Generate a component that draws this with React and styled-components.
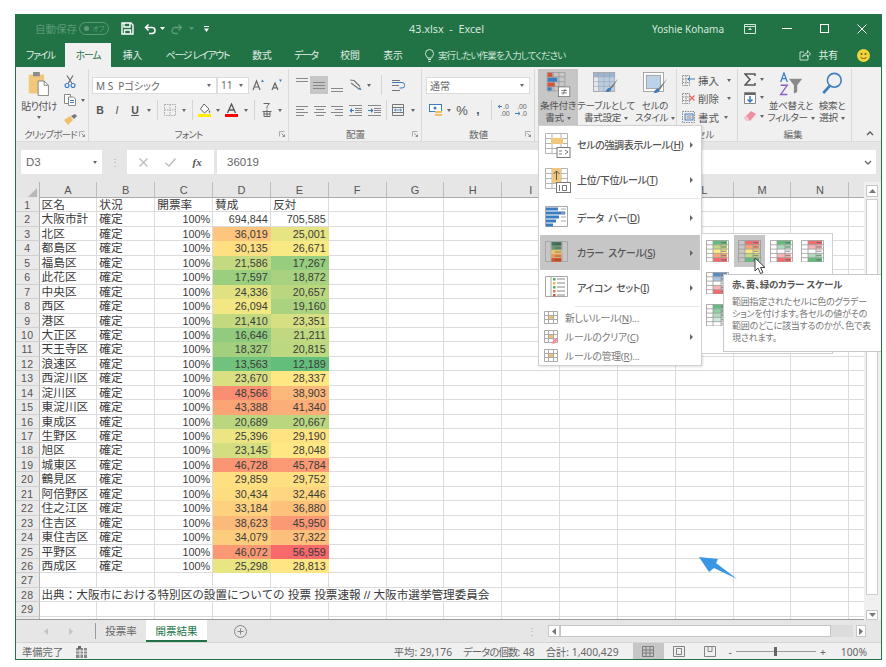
import styled, { createGlobalStyle } from 'styled-components';

const UI = '"Noto Sans", "Noto Sans CJK JP", sans-serif';
const CELL = '"Liberation Sans", "Noto Sans CJK JP", sans-serif';
const GREEN = '#217346';

const GlobalStyle = createGlobalStyle`
  html, body { margin: 0; padding: 0; background: #fff; }
  body { font-family: ${UI}; font-feature-settings: "palt"; overflow: hidden; }
`;

const Page = styled.div`
  padding: 14px 0 0 15px;
  width: 886px;
  height: 667px;
  box-sizing: border-box;
`;

const Window = styled.div`
  position: relative;
  width: 867px;
  height: 646px;
  box-sizing: border-box;
  border: 1px solid ${GREEN};
  border-top: 0;
  display: flex;
  flex-direction: column;
  background: #e6e6e6;
  overflow: hidden;
`;

/* title bar */
const TitleBar = styled.div`
  height: 29px;
  flex: none;
  background: ${GREEN};
  display: grid;
  grid-template-columns: 1fr auto 1fr;
  align-items: center;
  color: #d5e6dc;
  font-size: 10.5px;
`;

const FileName = styled.span`
  white-space: pre;
  font-size: 10.8px;
  padding-right: 4px;
`;

const Quick = styled.div`
  display: flex;
  align-items: center;
  padding-left: 19px;
`;

const AutoSave = styled.span`
  color: #5d9a78;
  font-size: 10.5px;
  width: 44px;
`;

const Toggle = styled.span`
  width: 24px;
  height: 11px;
  border: 1px solid #5d9a78;
  border-radius: 7px;
  color: #5d9a78;
  font-size: 7px;
  line-height: 11px;
  display: flex;
  align-items: center;
  padding-left: 4px;
  box-sizing: content-box;
  margin-right: 6px;
  gap: 3px;
  white-space: nowrap;
  overflow: hidden;
  &::before {
    content: '';
    width: 5px;
    height: 5px;
    flex: none;
    border-radius: 50%;
    background: #5d9a78;
  }
`;

const QuickSlot = styled.span`
  width: ${(p) => p.$w}px;
  display: flex;
  justify-content: center;
  align-items: center;
`;

const WinControls = styled.div`
  display: flex;
  align-items: center;
  justify-content: flex-end;
`;

const UserName = styled.span`
  margin-right: 7px;
  font-size: 10px;
`;

const WinButton = styled.span`
  width: 37.5px;
  display: flex;
  justify-content: center;
  align-items: center;
`;

const TabBar = styled.div`
  height: 24px;
  flex: none;
  background: ${GREEN};
  display: flex;
  align-items: stretch;
  color: #e4efe8;
  font-size: 9.8px;
`;

const Tab = styled.div`
  width: ${(p) => p.$w}px;
  display: flex;
  align-items: center;
  justify-content: center;
  white-space: nowrap;
  letter-spacing: ${(p) => (p.$kana ? '-1.2px' : '0')};
  background: ${(p) => (p.$active ? '#f0f0f0' : 'transparent')};
  color: ${(p) => (p.$active ? GREEN : 'inherit')};
`;

const TellMe = styled.div`
  display: flex;
  align-items: center;
  gap: 4px;
  margin-left: 10px;
  color: #cfe2d7;
  font-size: 9.5px;
  letter-spacing: -0.9px;
  white-space: nowrap;
`;

const ShareBox = styled.div`
  margin-left: auto;
  display: flex;
  align-items: center;
  gap: 7px;
  padding-right: 11px;
`;

const Smile = styled.span`
  margin-left: 12px;
  display: flex;
`;

/* ribbon */
const Ribbon = styled.div`
  height: 75px;
  flex: none;
  background: #f0f0f0;
  display: flex;
  color: #555;
  font-size: 10px;
  border-bottom: 1px solid #dcdcdc;
  box-sizing: border-box;
`;

const Group = styled.div`
  width: ${(p) => p.$w}px;
  flex: none;
  box-sizing: border-box;
  display: flex;
  flex-direction: column;
  margin-top: 2px;
  border-right: 1px solid #d9d9d9;
  padding-left: ${(p) => p.$pad || 0}px;
`;

const GroupBody = styled.div`
  flex: 1;
  min-height: 0;
`;

const GroupFoot = styled.div`
  height: 14px;
  flex: none;
  display: grid;
  grid-template-columns: 1fr auto 1fr;
  align-items: center;
  color: #666;
  font-size: 9.6px;
  white-space: nowrap;
  padding-right: 3px;
`;

const FootLabel = styled.span`
  letter-spacing: ${(p) => (p.$kana ? '-0.9px' : '0')};
`;

const Launcher = styled.span`
  justify-self: end;
  display: flex;
`;

const ToolRow = styled.div`
  display: flex;
  align-items: center;
  height: 18px;
  margin-top: ${(p) => p.$top || 0}px;
`;

const Tool = styled.span`
  width: ${(p) => p.$w}px;
  height: 18px;
  flex: none;
  display: flex;
  align-items: center;
  justify-content: center;
  background: ${(p) => (p.$on ? '#c6c6c6' : 'transparent')};
  color: #555;
  font-size: ${(p) => p.$fs || 11}px;
  font-weight: ${(p) => (p.$bold ? 700 : 400)};
  font-style: ${(p) => (p.$italic ? 'italic' : 'normal')};
  text-decoration: ${(p) => (p.$under ? 'underline' : 'none')};
  font-family: ${CELL};
`;

const Caret = styled.i`
  width: 0;
  height: 0;
  flex: none;
  margin-left: ${(p) => p.$left || 0}px;
  border-left: 2.5px solid transparent;
  border-right: 2.5px solid transparent;
  border-top: 3px solid #666;
  display: inline-block;
`;

const Rule = styled.span`
  width: ${(p) => p.$w}px;
  height: 20px;
  flex: none;
  display: flex;
  justify-content: center;
  &::before {
    content: '';
    width: 1px;
    background: #d4d4d4;
  }
`;

const SelectBox = styled.div`
  width: ${(p) => p.$w}px;
  height: 17px;
  flex: none;
  box-sizing: border-box;
  background: #fff;
  border: 1px solid #dcdcdc;
  display: flex;
  align-items: center;
  justify-content: space-between;
  padding: 0 5px 0 3px;
  color: #666;
  font-size: 10px;
  white-space: pre;
`;

const ClipWrap = styled.div`
  display: flex;
  padding: 3px 0 0 5px;
`;

const PasteCol = styled.div`
  width: 36px;
  display: flex;
  flex-direction: column;
  align-items: center;
  gap: 4px;
  font-size: 10px;
  line-height: 12px;
  letter-spacing: -0.6px;
  white-space: nowrap;
  color: #555;
`;

const SmallCol = styled.div`
  display: flex;
  flex-direction: column;
  gap: 1px;
  padding-left: 5px;
`;

const BigRow = styled.div`
  display: flex;
  gap: 2px;
  padding-left: 3px;
  height: 56px;
`;

const BigButton = styled.div`
  width: ${(p) => p.$w}px;
  flex: none;
  display: flex;
  flex-direction: column;
  align-items: center;
  padding-top: 3px;
  box-sizing: border-box;
  background: ${(p) => (p.$on ? '#c6c6c6' : 'transparent')};
  font-size: 9.6px;
  line-height: 12px;
  letter-spacing: -0.35px;
  color: #555;
  white-space: nowrap;
  text-align: center;
`;

const IconSlot = styled.div`
  height: 25px;
  display: flex;
  align-items: flex-start;
`;

const BigLabel = styled.div`
  margin-top: 3px;
  display: flex;
  flex-direction: column;
  align-items: center;
`;

const BigLine = styled.span`
  display: flex;
  align-items: center;
`;

const CellStack = styled.div`
  padding: 2px 0 0 5px;
  display: flex;
  flex-direction: column;
`;

const CellRow = styled.div`
  height: 18.5px;
  display: flex;
  align-items: center;
  gap: 3px;
  font-size: 10.5px;
  white-space: nowrap;
`;

const EditWrap = styled.div`
  display: flex;
`;

const EditStack = styled.div`
  width: 29px;
  box-sizing: border-box;
  padding: 1px 0 0 6px;
  display: flex;
  flex-direction: column;
`;

const EditRow = styled.div`
  height: 18.5px;
  display: flex;
  align-items: center;
  gap: 4px;
`;

const CollapseSlot = styled.div`
  flex: 1;
  display: flex;
  justify-content: flex-end;
  align-items: flex-end;
  padding: 0 7px 5px 0;
`;

/* formula bar */
const FormulaBar = styled.div`
  height: 40px;
  flex: none;
  display: flex;
  align-items: center;
  padding: 0 5px;
  background: #e6e6e6;
  color: #666;
  font-size: 11.5px;
`;

const NameBox = styled.div`
  width: 81px;
  height: 24px;
  box-sizing: border-box;
  background: #fff;
  display: flex;
  align-items: center;
  justify-content: space-between;
  padding: 0 5px;
  font-family: ${CELL};
`;

const Dots = styled.span`
  width: 25px;
  text-align: center;
  color: #aaa;
  font-size: 10px;
`;

const FxBox = styled.div`
  width: 87px;
  height: 24px;
  background: #fff;
  display: flex;
  align-items: center;
  justify-content: space-around;
  padding: 0 4px;
  box-sizing: border-box;
  margin-right: 3px;
  color: #bbb;
`;

const FxMark = styled.span`
  color: #555;
  font: italic 700 11px "Liberation Serif", serif;
`;

const FormulaInput = styled.div`
  flex: 1;
  height: 24px;
  background: #fff;
  display: flex;
  align-items: center;
  justify-content: space-between;
  padding: 0 4px 0 10px;
  font-family: ${CELL};
  font-size: 11.5px;
`;

/* sheet */
const SheetArea = styled.div`
  height: 438px;
  flex: none;
  display: flex;
  background: #fff;
`;

const Sheet = styled.div`
  width: 848px;
  flex: none;
  overflow: hidden;
  border-bottom: 1px solid #9a9a9a;
  box-sizing: border-box;
`;

const Grid = styled.div`
  display: grid;
  grid-template-columns: 23.5px repeat(15, 57.85px);
  grid-template-rows: 16px;
  grid-auto-rows: 14.44px;
  font-family: ${CELL};
`;

const Corner = styled.div`
  background: #e6e6e6;
  border-right: 1px solid #b5b5b5;
  display: flex;
  align-items: flex-end;
  justify-content: flex-end;
  padding: 0 2px 1px 0;
  box-sizing: border-box;
`;

const ColHead = styled.div`
  background: #e6e6e6;
  border-right: 1px solid #bdbdbd;
  border-bottom: 1px solid #ababab;
  box-sizing: border-box;
  text-align: center;
  color: #555;
  font-size: 11px;
  line-height: 16px;
`;

const RowHead = styled.div`
  background: #e9e9e9;
  border-right: 1px solid #b5b5b5;
  border-bottom: 1px solid #d0d0d0;
  box-sizing: border-box;
  text-align: center;
  color: #555;
  font-size: 10.5px;
  line-height: 14px;
  letter-spacing: 0.3px;
`;

const Cell = styled.div`
  grid-column: span ${(p) => p.$span || 1};
  border-right: 1px solid #dcdcdc;
  border-bottom: 1px solid #dcdcdc;
  box-sizing: border-box;
  padding: 0 2px;
  text-align: ${(p) => (p.$right ? 'right' : 'left')};
  color: #3a3a3a;
  font-size: ${(p) => (p.$right ? 10.8 : p.$span ? 11.6 : 11.7)}px;
  font-feature-settings: normal;
  line-height: 14px;
  white-space: nowrap;
  overflow: hidden;
`;

const VScroll = styled.div`
  flex: 1;
  background: #f0f0f0;
  display: flex;
  flex-direction: column;
  padding: 3px 3px 0 2px;
  box-sizing: border-box;
`;

const ScrollBtn = styled.div`
  height: ${(p) => p.$h || 11}px;
  flex: none;
  background: #fff;
  border: 1px solid #c8c8c8;
  box-sizing: border-box;
  display: flex;
  align-items: center;
  justify-content: center;
`;

const VThumb = styled.div`
  height: 396px;
  flex: none;
  margin-top: 2px;
  background: #fff;
  border: 1px solid #cfcfcf;
  box-sizing: border-box;
`;

const VGap = styled.div`
  flex: 1;
`;

/* sheet tabs */
const TabStrip = styled.div`
  height: 22px;
  flex: none;
  display: flex;
  align-items: stretch;
  background: #e6e6e6;
  border-bottom: 1px solid #d5d5d5;
  color: #666;
  font-size: 10.5px;
`;

const NavArrows = styled.div`
  width: 80px;
  display: flex;
  align-items: center;
  justify-content: space-around;
  padding: 0 12px 0 18px;
  box-sizing: border-box;
  border-right: 1px solid #9a9a9a;
  margin: 3px 0;
`;

const SheetTab = styled.div`
  width: ${(p) => p.$w}px;
  flex: none;
  display: flex;
  align-items: center;
  justify-content: center;
  background: ${(p) => (p.$active ? '#fff' : 'transparent')};
  color: ${(p) => (p.$active ? GREEN : '#666')};
  border-bottom: 2px solid ${(p) => (p.$active ? GREEN : 'transparent')};
  box-sizing: border-box;
`;

const AddSheet = styled.div`
  width: 66px;
  display: flex;
  align-items: center;
  justify-content: center;
`;

const HScrollWrap = styled.div`
  margin-left: auto;
  display: flex;
  align-items: center;
  padding-right: 15px;
`;

const HDots = styled.span`
  color: #aaa;
  margin-right: 11px;
  font-size: 10px;
`;

const HBtn = styled.div`
  width: ${(p) => p.$w}px;
  height: 12px;
  background: #fff;
  border: 1px solid #c8c8c8;
  box-sizing: border-box;
  display: flex;
  align-items: center;
  justify-content: center;
`;

const HTrack = styled.div`
  width: 293px;
  height: 12px;
  margin-right: 3px;
  background: #dcdcdc;
`;

const HThumb = styled.div`
  width: 271px;
  height: 12px;
  box-sizing: border-box;
  background: #fff;
  border: 1px solid #c4c4c4;
`;

/* status bar */
const StatusBar = styled.div`
  flex: 1;
  display: flex;
  align-items: center;
  background: #f0f0f0;
  color: #666;
  font-size: 10.3px;
  padding-left: 6px;
  white-space: nowrap;
`;

const StatusMode = styled.span`
  width: 54px;
`;

const StatusInfo = styled.div`
  margin-left: auto;
  display: flex;
  gap: 11px;
`;

const StatusKana = styled.span`
  letter-spacing: -0.8px;
`;

const ViewBtn = styled.span`
  width: 31px;
  height: 17px;
  display: flex;
  align-items: center;
  justify-content: center;
  background: ${(p) => (p.$on ? '#c6c6c6' : 'transparent')};
`;

const ViewGroup = styled.div`
  display: flex;
  margin-left: 14px;
`;

const Zoom = styled.div`
  display: flex;
  align-items: center;
  margin: 0 14px 0 3px;
  gap: 4px;
`;

const ZoomTrack = styled.div`
  position: relative;
  width: 80px;
  height: 1px;
  background: #9a9a9a;
  &::after {
    content: '';
    position: absolute;
    left: 38px;
    top: -4px;
    width: 3px;
    height: 9px;
    background: #666;
  }
`;

const ZoomLabel = styled.span`
  margin-left: 11px;
`;

/* conditional formatting menu, over the sheet */
const Menu = styled.div`
  position: absolute;
  left: 522px;
  top: 111px;
  width: 164px;
  height: 241px;
  box-sizing: border-box;
  background: #fff;
  border: 1px solid #d0d0d0;
  padding: 1px;
  box-shadow: 1px 1px 2px rgba(0, 0, 0, 0.12);
  color: #555;
`;

const MenuItem = styled.div`
  height: ${(p) => (p.$small ? 19 : 35)}px;
  display: flex;
  align-items: center;
  background: ${(p) => (p.$on ? '#c6c6c6' : 'transparent')};
  font-size: ${(p) => (p.$small ? 9.8 : 10)}px;
  font-weight: ${(p) => (p.$small ? 400 : 500)};
  letter-spacing: ${(p) => (p.$small ? '-0.2px' : '-0.35px')};
  color: ${(p) => (p.$small ? '#777' : '#555')};
  white-space: pre;
`;

const MenuIcon = styled.span`
  width: ${(p) => (p.$small ? 25 : 37)}px;
  padding-left: ${(p) => (p.$small ? 4 : 5)}px;
  box-sizing: border-box;
  flex: none;
  display: flex;
`;

const MenuText = styled.span`
  flex: 1;
`;

const Key = styled.span`
  text-decoration: underline;
`;

const MenuArrow = styled.i`
  width: 0;
  height: 0;
  margin-right: 7px;
  border-top: 3px solid transparent;
  border-bottom: 3px solid transparent;
  border-left: 3.5px solid #666;
`;

const MenuRule = styled.div`
  height: 1px;
  margin: 1px 0 1px 35px;
  background: #e6e6e6;
`;

const SubMenu = styled.div`
  position: absolute;
  left: 685px;
  top: 219px;
  width: 132px;
  height: 121px;
  box-sizing: border-box;
  background: #fff;
  border: 1px solid #d0d0d0;
  padding: 1px 0 0;
  display: grid;
  grid-template-columns: repeat(4, 31.7px);
  grid-auto-rows: 32px;
`;

const SwatchBtn = styled.span`
  display: flex;
  align-items: center;
  justify-content: center;
  background: ${(p) => (p.$on ? '#c6c6c6' : 'transparent')};
`;

const Tooltip = styled.div`
  position: absolute;
  left: 707px;
  top: 260px;
  width: 159px;
  height: 78px;
  box-sizing: border-box;
  background: #fff;
  border: 1px solid #c8c8c8;
  padding: 4px 8px;
  color: #777;
  font-size: 9px;
  line-height: 12px;
  letter-spacing: -0.2px;
`;

const TipTitle = styled.div`
  font-weight: 700;
  color: #555;
  margin-bottom: 5px;
  font-size: 9.5px;
  white-space: nowrap;
`;

const TipLine = styled.div`
  white-space: nowrap;
`;

const Overlay = styled.svg`
  position: absolute;
  left: ${(p) => p.$x}px;
  top: ${(p) => p.$y}px;
`;

/* drawings */
const Svg = styled.svg`
  display: block;
  flex: none;
`;

const Icon = ({ w, h, vw, vh, children }) => (
  <Svg width={w} height={h} viewBox={`0 0 ${vw || w} ${vh || h}`} fill="none">{children}</Svg>
);

const Lines = ({ x = 1, ys, w = 14, color = '#777' }) => (
  <>
    {ys.map((y) => <rect key={y} x={x} y={y} width={w} height="1" fill={color} />)}
  </>
);

const SaveIcon = () => (
  <Icon w={13} h={13}>
    <path d="M1 1h9l2 2v9H1z M3 1.5v3.5h6V1.5 M3.5 12V8h6v4" stroke="#fff" strokeWidth="1.4" />
  </Icon>
);
const UndoIcon = () => (
  <Icon w={13} h={12}>
    <path d="M4.5 1.5 1.5 4.5 4.5 7.5 M2 4.5h6a3 3 0 0 1 0 6H5" stroke="#fff" strokeWidth="1.5" />
  </Icon>
);
const RedoIcon = () => (
  <Icon w={13} h={12}>
    <path d="M8.5 1.5 11.5 4.5 8.5 7.5 M11 4.5H5a3 3 0 0 0 0 6h3" stroke="#5d9a78" strokeWidth="1.3" />
  </Icon>
);
const TinyCaret = ({ color = '#fff' }) => (
  <Icon w={5} h={3}><path d="M0 0h5L2.5 3z" fill={color} /></Icon>
);
const CustomizeIcon = () => (
  <Icon w={5} h={6}><path d="M0 0h5v1H0z M0 2.5h5L2.5 6z" fill="#fff" /></Icon>
);
const DisplayIcon = () => (
  <Icon w={12} h={10}>
    <path d="M.5.5h11v9H.5z M.5 2.5h11" stroke="#d5e6dc" />
    <path d="M6 3.5 8 6H4z" fill="#d5e6dc" />
  </Icon>
);
const MinIcon = () => <Icon w={10} h={2}><rect width="10" height="1" fill="#fff" /></Icon>;
const MaxIcon = () => <Icon w={9} h={9}><rect x=".5" y=".5" width="8" height="8" stroke="#fff" /></Icon>;
const CloseIcon = () => (
  <Icon w={10} h={10}><path d="M.5.5l9 9M9.5.5l-9 9" stroke="#fff" /></Icon>
);
const BulbIcon = () => (
  <Icon w={9} h={13}>
    <path d="M2.5 9C2 7.5.5 6.5.5 4.5a4 4 0 0 1 8 0C8.5 6.5 7 7.5 6.5 9zM3 10.5h3M3.5 12.5h2" stroke="#e4efe8" strokeWidth=".9" />
  </Icon>
);
const ShareIcon = () => (
  <Icon w={12} h={12}>
    <path d="M5 3H1v8h8V7 M3.5 8c.5-3 3-4 5-4V1.5L11.5 5 8.5 8V6C6.5 6 5 6.5 3.5 8z" stroke="#d5e6dc" strokeWidth=".9" />
  </Icon>
);
const SmileIcon = () => (
  <Icon w={13} h={13}>
    <circle cx="6.5" cy="6.5" r="6.5" fill="#f3d43b" />
    <circle cx="4.5" cy="5" r="1" fill="#5d5a20" />
    <circle cx="8.5" cy="5" r="1" fill="#5d5a20" />
    <path d="M3.5 8c1 2 5 2 6 0" stroke="#5d5a20" />
  </Icon>
);
const LaunchIcon = () => (
  <Icon w={6} h={6}>
    <path d="M.5 5.5V.5h5" stroke="#999" strokeWidth=".8" />
    <path d="M2.5 2.5 5.5 5.5M5.5 3.5v2h-2" stroke="#777" strokeWidth=".8" />
  </Icon>
);
const PasteIcon = () => (
  <Icon w={22} h={24} vw={24} vh={28}>
    <rect x="0" y="3" width="18" height="22" fill="#f0c77c" />
    <rect x="5" y="0" width="8" height="5" fill="#8c8c8c" />
    <path d="M11 10.5h7l5 5v12H11z" fill="#fff" stroke="#777" />
    <path d="M18 10.5v5h5" stroke="#777" />
  </Icon>
);
const ScissorsIcon = () => (
  <Icon w={12} h={13}>
    <path d="M3 .5 8 8.5M9 .5 4 8.5" stroke="#666" strokeWidth="1.1" />
    <circle cx="3" cy="10.5" r="2" stroke="#3e7cc0" strokeWidth="1.2" />
    <circle cx="9" cy="10.5" r="2" stroke="#3e7cc0" strokeWidth="1.2" />
  </Icon>
);
const CopyIcon = () => (
  <Icon w={12} h={12}>
    <path d="M.5.5h6v9h-6z" stroke="#888" fill="#fff" />
    <path d="M4.5 3h5l2 2v6.5h-7z" stroke="#888" fill="#fff" />
    <path d="M6 6.5h4M6 8.5h4" stroke="#3e7cc0" />
  </Icon>
);
const BrushIcon = () => (
  <Icon w={13} h={11}>
    <path d="M0 6 6 2l3 4-5 5z" fill="#efc06b" />
    <path d="M7 2l4-2 2 2-3 3z" fill="#777" />
  </Icon>
);
const GrowIcon = ({ big }) => (
  <Icon w={13} h={12}>
    <path d={big ? 'M1 11 4.5 2 8 11M2.3 8h4.4' : 'M2 11 5 4l3 7M3 8.8h4'} stroke="#666" strokeWidth="1.2" />
    <path d={big ? 'M9 3l1.5-2.5L12 3z' : 'M9 .5h3L10.5 3z'} fill="#3e7cc0" />
  </Icon>
);
const BorderIcon = () => (
  <Icon w={12} h={12}>
    <path d="M.5.5h11v11H.5zM6 .5v11M.5 6h11" stroke="#aaa" strokeDasharray="1.5 1" />
  </Icon>
);
const FillIcon = () => (
  <Icon w={14} h={14}>
    <path d="M6 1 11 6 6.5 10 2.5 6z" stroke="#666" fill="#fff" />
    <path d="M11.5 7c1 1.5 1 2.5 0 3-1-.5-1-1.5 0-3z" fill="#666" />
    <rect x="0" y="11" width="13" height="3" fill="#ffee00" />
  </Icon>
);
const FontColorIcon = () => (
  <Icon w={13} h={14}>
    <path d="M2.5 10 6.5 1l4 9M4 7h5" stroke="#555" strokeWidth="1.3" />
    <rect y="11" width="13" height="3" fill="#f00" />
  </Icon>
);
const PhoneticIcon = () => (
  <Icon w={10} h={14}>
    <path d="M1.5.5h6L5 3.5v2M.5 8.5h9M2 8.5v5h6v-5M5 6.5v7M2 11h6" stroke="#666" />
  </Icon>
);
const AlignIcon = ({ kind }) => {
  const ys = { top: [1, 4], mid: [5, 8, 11], bot: [11, 14] }[kind];
  return <Icon w={12} h={16}><Lines x={0} ys={ys} w={12} color="#888" /></Icon>;
};
const HAlignIcon = ({ kind }) => {
  const widths = [12, 8, 12, 8];
  const off = { left: () => 0, center: (w) => (12 - w) / 2, right: (w) => 12 - w };
  return (
    <Icon w={12} h={11}>
      {widths.map((w, i) => <rect key={i} x={off[kind](w)} y={i * 3 + 1} width={w} height="1" fill="#888" />)}
    </Icon>
  );
};
const IndentIcon = ({ right }) => (
  <Icon w={13} h={11}>
    <Lines x={0} ys={[0, 10]} w={13} color="#888" />
    <Lines x={6} ys={[3, 5, 7]} w={7} color="#888" />
    <path d={right ? 'M0 5h3V3l2.5 2.5L3 8V6H0z' : 'M5 5H3V3L.5 5.5 3 8V6h2z'} fill="#3e7cc0" />
  </Icon>
);
const OrientIcon = () => (
  <Icon w={13} h={12}>
    <path d="M1 1l4 .5M2 4l8 6M5 1.5l6 6" stroke="#777" strokeWidth="1.1" />
    <path d="M11 8l1.5 3-3-.5z" fill="#3e7cc0" />
  </Icon>
);
const WrapIcon = () => (
  <Icon w={13} h={13}>
    <Lines x={0} ys={[1, 11]} w={8} color="#777" />
    <rect y="6" width="7" height="1" fill="#777" />
    <path d="M0 3.5h10a2 2 0 0 1 0 5.5H7.5" stroke="#3e7cc0" />
  </Icon>
);
const MergeIcon = () => (
  <Icon w={12} h={12}>
    <path d="M.5.5h11v11H.5zM.5 3.5h11M.5 8.5h11" stroke="#777" />
    <path d="M2.5 6h7M4 4.8 2.5 6 4 7.2M8 4.8 9.5 6 8 7.2" stroke="#3e7cc0" strokeWidth=".8" />
  </Icon>
);
const CurrencyIcon = () => (
  <Icon w={13} h={13}>
    <rect x=".5" y=".5" width="12" height="7" fill="#fff" stroke="#3e7cc0" />
    <circle cx="6" cy="4" r="1.5" fill="#3e7cc0" />
    <rect x="6" y="7" width="7" height="2" fill="#efc06b" />
    <rect x="6" y="10" width="7" height="2" fill="#efc06b" />
  </Icon>
);
const DecIcon = ({ inc }) => (
  <Icon w={14} h={14}>
    <text x={inc ? 5 : 2} y="6" fontSize="7" fill="#666" fontFamily="Liberation Sans">{inc ? '.0' : '.00'}</text>
    <text x={inc ? 2 : 6} y="13" fontSize="7" fill="#666" fontFamily="Liberation Sans">{inc ? '.00' : '.0'}</text>
    <path d={inc ? 'M0 3.5h4M2 1.8.3 3.5 2 5.2' : 'M0 10.5h5M3.2 8.8 5 10.5 3.2 12.2'} stroke="#3e7cc0" />
  </Icon>
);
const CondIcon = () => (
  <Icon w={25} h={25} vw={29} vh={31}>
    <path d="M.5.5h22v23H.5zM.5 6h22M.5 12h22M.5 18h22M8 .5v23M15 .5v23" stroke="#999" />
    <rect x="1" y="1" width="6" height="5" fill="#d2553a" />
    <rect x="1" y="7" width="12" height="5" fill="#3e7cc0" />
    <rect x="1" y="13" width="9" height="5" fill="#d2553a" />
    <rect x="1" y="19" width="5" height="4" fill="#3e7cc0" />
    <rect x="14.5" y="18.5" width="14" height="12" fill="#fff" stroke="#777" />
    <path d="M18 23h7M18 26h7M23 21l-3 7" stroke="#555" strokeWidth=".9" />
  </Icon>
);
const TableIcon = () => (
  <Icon w={26} h={24} vw={33} vh={30}>
    <rect x=".5" y=".5" width="27" height="24" fill="#e4e8ee" stroke="#999" />
    <rect x="1" y="1" width="27" height="5" fill="#9eb4cf" />
    <rect x="7" y="6" width="20" height="18" fill="#bccde0" />
    <path d="M.5 6h27M.5 12h27M.5 18h27M7 .5v24M14 .5v24M21 .5v24" stroke="#97a2ae" strokeWidth=".7" />
    <path d="M32 8 23 18l-2 2c-3 0-4 3-5 5 4 0 7-1 7-4l2-2z" fill="#7b7b7b" />
    <path d="M21 20c-3 0-4 3-5 5 4 0 7-1 7-4z" fill="#3e7cc0" />
  </Icon>
);
const CellStyleIcon = () => (
  <Icon w={25} h={25} vw={30} vh={30}>
    <rect x=".5" y=".5" width="24" height="23" fill="#fff" stroke="#999" />
    <rect x="4" y="4" width="17" height="16" fill="#bcd2e8" stroke="#999" />
    <path d="M29 8 20 18l-2 2c-3 0-4 3-5 5 4 0 7-1 7-4l2-2z" fill="#7b7b7b" />
    <path d="M18 20c-3 0-4 3-5 5 4 0 7-1 7-4z" fill="#3e7cc0" />
  </Icon>
);
const CellOpIcon = ({ mark }) => (
  <Icon w={13} h={13}>
    <path d="M.5 1.5h7v10h-7zM.5 5h7M.5 8.5h7M4 1.5v10" stroke="#888" strokeWidth=".9" strokeDasharray="1.5 .8" />
    {mark === 'in' && <path d="M6 5h7M8 3 6 5l2 2" stroke="#3e7cc0" />}
    {mark === 'del' && <path d="M7.5 3.5l5 5M12.5 3.5l-5 5" stroke="#e2685a" strokeWidth="1.2" />}
  </Icon>
);
const FormatIcon = () => (
  <Icon w={13} h={12}>
    <path d="M.5.5h12v11H.5z" stroke="#888" strokeDasharray="1.5 1" />
    <rect x="3" y="3" width="8" height="6" stroke="#3e7cc0" />
    <path d="M4.5 5h5M4.5 7h5" stroke="#888" />
  </Icon>
);
const SigmaIcon = () => (
  <Icon w={12} h={13}><path d="M11 3V1H1l5 5.5L1 12h10v-2" stroke="#555" strokeWidth="1.5" /></Icon>
);
const FillDownIcon = () => (
  <Icon w={12} h={12}>
    <path d="M.5.5h11v11H.5z" stroke="#888" fill="#fff" />
    <rect x="1" y="1" width="10" height="2" fill="#666" />
    <path d="M6 4v6M3.5 7.5 6 10l2.5-2.5" stroke="#3e7cc0" strokeWidth="1.5" />
  </Icon>
);
const EraserIcon = () => (
  <Icon w={12} h={10}>
    <path d="M0 7 7 0l5 3-6 7H3z" fill="#ef8fa0" />
    <path d="M0 7l3 3h3L3 5z" fill="#f6c6cf" />
  </Icon>
);
const SortIcon = () => (
  <Icon w={24} h={25} vw={29} vh={30}>
    <path d="M2 12 6 1l4 11M3.5 8h5" stroke="#3e7cc0" strokeWidth="1.5" />
    <path d="M2 16h8L2 27h8" stroke="#8a5fc2" strokeWidth="1.7" />
    <path d="M12 8h16l-6 8v8l-4 2V16z" fill="#8a8a8a" />
  </Icon>
);
const FindIcon = () => (
  <Icon w={22} h={23} vw={23} vh={25}>
    <circle cx="14" cy="9" r="7.5" stroke="#3e7cc0" strokeWidth="1.7" />
    <path d="M9 15 2 23" stroke="#3e7cc0" strokeWidth="3" />
  </Icon>
);
const ChevronUp = () => <Icon w={8} h={5}><path d="M1 4l3-3 3 3" stroke="#555" strokeWidth="1.3" /></Icon>;
const ChevronDown = () => <Icon w={8} h={5}><path d="M1 1l3 3 3-3" stroke="#666" strokeWidth="1.3" /></Icon>;
const CrossMark = () => <Icon w={9} h={9}><path d="M.5.5l8 8M8.5.5l-8 8" stroke="#bbb" strokeWidth="1.2" /></Icon>;
const CheckMark = () => <Icon w={11} h={9}><path d="M.5 5l3.5 3L10.5.5" stroke="#bbb" strokeWidth="1.3" /></Icon>;
const SelectAll = () => <Icon w={9} h={9}><path d="M9 0v9H0z" fill="#b8b8b8" /></Icon>;
const Tri = ({ dir, color = '#777' }) => {
  const d = { up: 'M0 4 3.5 0 7 4z', down: 'M0 0h7L3.5 4z', left: 'M4 0v7L0 3.5z', right: 'M0 0v7l4-3.5z' }[dir];
  const box = dir === 'up' || dir === 'down' ? [7, 4] : [4, 7];
  return <Icon w={box[0]} h={box[1]}><path d={d} fill={color} /></Icon>;
};
const CellModeIcon = () => (
  <Icon w={11} h={12}>
    <rect y="2" width="11" height="10" fill="#888" />
    <path d="M0 5h11M0 8h11M4 2v10M7.5 2v10" stroke="#f0f0f0" />
    <rect x="2" width="3" height="3" fill="#666" />
  </Icon>
);
const PlusCircle = () => (
  <Icon w={13} h={13}>
    <circle cx="6.5" cy="6.5" r="6" stroke="#888" />
    <path d="M6.5 3.5v6M3.5 6.5h6" stroke="#888" />
  </Icon>
);
const NormalView = () => (
  <Icon w={12} h={11}><path d="M.5.5h11v10H.5zM4 .5v10M8 .5v10M.5 4h11M.5 7h11" stroke="#777" strokeWidth=".9" /></Icon>
);
const PageView = () => (
  <Icon w={12} h={11}><path d="M.5.5h11v10H.5zM3.5 2.5h5v6h-5z" stroke="#777" strokeWidth=".9" /></Icon>
);
const BreakView = () => (
  <Icon w={12} h={11}><path d="M.5 10.5V.5h11v10zM4 .5v5h4v-5" stroke="#777" strokeWidth=".9" /></Icon>
);

/* sheets in the menu */
const SheetBase = ({ children }) => (
  <Icon w={26} h={26}>
    <path d="M.5 1.5h22v20H.5zM.5 6.5h22M.5 11.5h22M.5 16.5h22M7 1.5v20M16 1.5v20" stroke="#b4b4b4" />
    {children}
  </Icon>
);
const HighlightMenuIcon = () => (
  <SheetBase>
    <rect x="6" y="6" width="12" height="6" fill="#f0c77c" />
    <rect x="12" y="15.5" width="13" height="10" fill="#fff" stroke="#777" />
    <path d="M14 19h3M14 22h3M20 18l3 2-3 2" stroke="#555" strokeWidth=".8" />
  </SheetBase>
);
const TopMenuIcon = () => (
  <SheetBase>
    <rect x="7" y="1" width="9" height="15" fill="#f0c77c" />
    <path d="M11.5 13V4M8.5 7l3-3 3 3" stroke="#555" />
    <rect x="11.5" y="15.5" width="14" height="10" fill="#fff" stroke="#777" />
    <path d="M14.5 18v6M17.5 18.5h4v5h-4z" stroke="#555" strokeWidth=".8" />
  </SheetBase>
);
const BarsMenuIcon = () => (
  <Icon w={26} h={26}>
    <path d="M.5 1.5h22v20H.5z" stroke="#a8a8a8" />
    {[[2, 12], [6, 19], [10, 13], [14, 10], [18, 7]].map(([y, w]) => (
      <rect key={y} x="1" y={y + 0.5} width={w} height="3" fill="#3e7cc0" />
    ))}
    <path d="M16 4h5M16 8h5M16 12h5M16 16h5" stroke="#aaa" />
  </Icon>
);
const ScaleMenuIcon = () => (
  <Icon w={26} h={26}>
    <path d="M.5 1.5h22v20H.5zM6 1.5v20M17 1.5v20" stroke="#a8a8a8" />
    {['#47785f', '#6f9a73', '#eec26a', '#ea9a55', '#d6572f'].map((c, i) => (
      <rect key={c} x="6.5" y={2 + i * 4} width="10" height="3.8" fill={c} />
    ))}
    <path d="M10 4h6M10 8h6M10 12h6M10 16h6M10 20h6" stroke="#3b3b3b" strokeOpacity=".5" />
  </Icon>
);
const SetMenuIcon = () => (
  <Icon w={26} h={26}>
    <path d="M.5 1.5h22v20H.5zM6 1.5v20" stroke="#a8a8a8" />
    {['#5aa860', '#e8c04a', '#5aa860', '#e07b3a', '#d6572f'].map((c, i) => (
      <rect key={i} x="8" y={3 + i * 4} width="2.5" height="2.5" fill={c} />
    ))}
    <path d="M12 4h8M12 8h8M12 12h8M12 16h8M12 20h8" stroke="#888" />
  </Icon>
);
const SmallRule = ({ kind }) => (
  <Icon w={14} h={14}>
    <path d="M.5.5h13v12H.5zM.5 4.5h13M.5 8.5h13M4.5.5v12M9.5.5v12" stroke="#aaa" />
    <rect x="5" y="5" width="4" height="3" fill="#efc06b" />
    {kind === 'clear' && <path d="M7 13l5-5 2 2-4 4z" fill="#ef8fa0" />}
  </Icon>
);

const Thumb = ({ colors }) => (
  <Icon w={23} h={22}>
    {colors.map((c, i) => <rect key={i} x="7" y={i * 4.3 + .5} width="14" height="4.3" fill={c} />)}
    <path d="M.5.5h22v21.5H.5zM.5 4.8h22M.5 9.1h22M.5 13.4h22M.5 17.7h22M7 .5v21.5M15 .5v21.5" stroke="#9a9a9a" strokeWidth=".8" />
    {colors.map((c, i) => <rect key={i} x="15.5" y={i * 4.3 + 2} width="5" height="1.3" fill="#555" fillOpacity=".55" />)}
  </Icon>
);

const SCALES = [
  ['#5fbe7b', '#c1d980', '#ffeb84', '#fba276', '#f8696b'],
  ['#f8696b', '#fba276', '#ffeb84', '#c1d980', '#5fbe7b'],
  ['#5fbe7b', '#afdcbc', '#ffffff', '#fbb4b5', '#f8696b'],
  ['#f8696b', '#fbb4b5', '#ffffff', '#afdcbc', '#5fbe7b'],
  ['#5a8ac6', '#acc5e3', '#ffffff', '#fbb4b5', '#f8696b'],
  null,
  null,
  null,
  ['#5fbe7b', '#8fd1a3', '#afdcbc', '#cfeada', '#ffffff'],
];

const RawData = `大阪市計 694,844 705,585
北区 36019 25001
都島区 30135 26671
福島区 21586 17267
此花区 17597 18872
中央区 24336 20657
西区 26094 19160
港区 21410 23351
大正区 16646 21211
天王寺区 18327 20815
浪速区 13563 12189
西淀川区 23670 28337
淀川区 48566 38903
東淀川区 43388 41340
東成区 20689 20667
生野区 25396 29190
旭区 23145 28048
城東区 46728 45784
鶴見区 29859 29752
阿倍野区 30434 32446
住之江区 33184 36880
住吉区 38623 45950
東住吉区 34079 37322
平野区 46072 56959
西成区 25298 28813`;

const rows = RawData.split('\n').map((l, i) => {
  const [name, a, b] = l.split(' ');
  return { name, a, b, scaled: i > 0 };
});

const scaledValues = rows
  .filter((r) => r.scaled)
  .flatMap((r) => [Number(r.a), Number(r.b)])
  .sort((x, y) => x - y);
const vMin = scaledValues[0];
const vMax = scaledValues[scaledValues.length - 1];
const vMid = (scaledValues[23] + scaledValues[24]) / 2;

const mix = (c1, c2, t) => {
  const m = c1.map((v, i) => Math.round(v + (c2[i] - v) * t));
  return `rgb(${m[0]},${m[1]},${m[2]})`;
};

const scaleColor = (v) => {
  const g = [99, 190, 123];
  const y = [255, 235, 132];
  const r = [248, 105, 107];
  return v < vMid ? mix(g, y, (v - vMin) / (vMid - vMin)) : mix(y, r, (v - vMid) / (vMax - vMid));
};

const COLS = 'ABCDEFGHIJKLMN'.split('');

const emptyCells = (key, n) =>
  Array.from({ length: n }, (_, i) => <Cell key={`${key}-${i}`} />);

const fmt = (s) => (s.includes(',') ? s : Number(s).toLocaleString('en-US'));

const scaledStyle = (row, v) =>
  row.scaled ? { background: scaleColor(Number(v)), borderColor: 'transparent' } : undefined;

const SheetRow = ({ row, index }) => (
  <>
    <RowHead>{index}</RowHead>
    <Cell>{row.name}</Cell>
    <Cell>確定</Cell>
    <Cell $right>100%</Cell>
    <Cell $right style={scaledStyle(row, row.a)}>{fmt(row.a)}</Cell>
    <Cell $right style={scaledStyle(row, row.b)}>{fmt(row.b)}</Cell>
    {emptyCells(index, 10)}
  </>
);

const Row28 = () => (
  <>
    <RowHead>28</RowHead>
    <Cell $span={8}>出典：大阪市における特別区の設置についての 投票 投票速報 // 大阪市選挙管理委員会</Cell>
    {emptyCells('r28', 7)}
  </>
);

const EmptyRow = ({ n }) => (
  <>
    <RowHead>{n}</RowHead>
    {emptyCells(`r${n}`, 15)}
  </>
);

const App = () => (
  <Page>
    <GlobalStyle />
    <Window>
      <TitleBar>
        <Quick>
          <AutoSave>自動保存</AutoSave>
          <Toggle>オフ</Toggle>
          <QuickSlot $w={25}><SaveIcon /></QuickSlot>
          <QuickSlot $w={20}><UndoIcon /></QuickSlot>
          <QuickSlot $w={5}><TinyCaret /></QuickSlot>
          <QuickSlot $w={23}><RedoIcon /></QuickSlot>
          <QuickSlot $w={6}><TinyCaret color="#5d9a78" /></QuickSlot>
          <QuickSlot $w={24}><CustomizeIcon /></QuickSlot>
        </Quick>
        <FileName>43.xlsx  -  Excel</FileName>
        <WinControls>
          <UserName>Yoshie Kohama</UserName>
          <WinButton><DisplayIcon /></WinButton>
          <WinButton><MinIcon /></WinButton>
          <WinButton><MaxIcon /></WinButton>
          <WinButton><CloseIcon /></WinButton>
        </WinControls>
      </TitleBar>

      <TabBar>
        <Tab $w={49} $kana>ファイル</Tab>
        <Tab $w={46} $kana $active>ホーム</Tab>
        <Tab $w={43}>挿入</Tab>
        <Tab $w={87} $kana>ページ レイアウト</Tab>
        <Tab $w={42}>数式</Tab>
        <Tab $w={46} $kana>データ</Tab>
        <Tab $w={42}>校閲</Tab>
        <Tab $w={44}>表示</Tab>
        <TellMe><BulbIcon />実行したい作業を入力してください</TellMe>
        <ShareBox>
          <ShareIcon />共有
          <Smile><SmileIcon /></Smile>
        </ShareBox>
      </TabBar>

      <Ribbon>
        <Group $w={73}>
          <GroupBody>
            <ClipWrap>
              <PasteCol>
                <PasteIcon />
                <span>貼り付け</span>
                <Caret />
              </PasteCol>
              <SmallCol>
                <Tool $w={16}><ScissorsIcon /></Tool>
                <ToolRow>
                  <Tool $w={16}><CopyIcon /></Tool>
                  <Tool $w={10}><Caret /></Tool>
                </ToolRow>
                <Tool $w={16}><BrushIcon /></Tool>
              </SmallCol>
            </ClipWrap>
          </GroupBody>
          <GroupFoot><span /><FootLabel $kana>クリップボード</FootLabel><Launcher><LaunchIcon /></Launcher></GroupFoot>
        </Group>

        <Group $w={200} $pad={3}>
          <GroupBody>
            <ToolRow $top={7}>
              <SelectBox $w={125}>M S  Pゴシック<Caret /></SelectBox>
              <SelectBox $w={32}>11<Caret /></SelectBox>
              <Tool $w={18}><GrowIcon big /></Tool>
              <Tool $w={18}><GrowIcon /></Tool>
            </ToolRow>
            <ToolRow $top={7}>
              <Tool $w={16} $bold $fs={10.5}>B</Tool>
              <Tool $w={18} $italic $fs={10.5}>I</Tool>
              <Tool $w={18} $bold $under $fs={10.5}>U</Tool>
              <Tool $w={10}><Caret /></Tool>
              <Rule $w={6} />
              <Tool $w={20}><BorderIcon /></Tool>
              <Tool $w={8}><Caret /></Tool>
              <Rule $w={8} />
              <Tool $w={18}><FillIcon /></Tool>
              <Tool $w={8}><Caret /></Tool>
              <Tool $w={19}><FontColorIcon /></Tool>
              <Tool $w={9}><Caret /></Tool>
              <Rule $w={8} />
              <Tool $w={18}><PhoneticIcon /></Tool>
              <Tool $w={8}><Caret /></Tool>
            </ToolRow>
          </GroupBody>
          <GroupFoot><span /><FootLabel $kana>フォント</FootLabel><Launcher><LaunchIcon /></Launcher></GroupFoot>
        </Group>

        <Group $w={133} $pad={4}>
          <GroupBody>
            <ToolRow $top={7}>
              <Tool $w={17}><AlignIcon kind="top" /></Tool>
              <Tool $w={18} $on><AlignIcon kind="mid" /></Tool>
              <Tool $w={18}><AlignIcon kind="bot" /></Tool>
              <Tool $w={19}><OrientIcon /></Tool>
              <Tool $w={8}><Caret /></Tool>
              <Rule $w={17} />
              <Tool $w={16}><WrapIcon /></Tool>
            </ToolRow>
            <ToolRow $top={7}>
              <Tool $w={18}><HAlignIcon kind="left" /></Tool>
              <Tool $w={17}><HAlignIcon kind="center" /></Tool>
              <Tool $w={18}><HAlignIcon kind="right" /></Tool>
              <Tool $w={19}><IndentIcon /></Tool>
              <Tool $w={18}><IndentIcon right /></Tool>
              <Rule $w={6} />
              <Tool $w={18}><MergeIcon /></Tool>
              <Tool $w={11}><Caret /></Tool>
            </ToolRow>
          </GroupBody>
          <GroupFoot><span /><FootLabel>配置</FootLabel><Launcher><LaunchIcon /></Launcher></GroupFoot>
        </Group>

        <Group $w={113} $pad={4}>
          <GroupBody>
            <ToolRow $top={7}>
              <SelectBox $w={104}>通常<Caret /></SelectBox>
            </ToolRow>
            <ToolRow $top={7}>
              <Tool $w={19}><CurrencyIcon /></Tool>
              <Tool $w={8}><Caret /></Tool>
              <Tool $w={18} $fs={13}>%</Tool>
              <Tool $w={14} $bold $fs={12}>,</Tool>
              <Rule $w={12} />
              <Tool $w={16}><DecIcon inc /></Tool>
              <Tool $w={17}><DecIcon /></Tool>
            </ToolRow>
          </GroupBody>
          <GroupFoot><span /><FootLabel>数値</FootLabel><Launcher><LaunchIcon /></Launcher></GroupFoot>
        </Group>

        <Group $w={142}>
          <GroupBody>
            <BigRow>
              <BigButton $w={40} $on>
                <IconSlot><CondIcon /></IconSlot>
                <BigLabel><span>条件付き</span><BigLine>書式<Caret $left={3} /></BigLine></BigLabel>
              </BigButton>
              <BigButton $w={52}>
                <IconSlot><TableIcon /></IconSlot>
                <BigLabel><span>テーブルとして</span><BigLine>書式設定<Caret $left={3} /></BigLine></BigLabel>
              </BigButton>
              <BigButton $w={42}>
                <IconSlot><CellStyleIcon /></IconSlot>
                <BigLabel><span>セルの</span><BigLine>スタイル<Caret $left={3} /></BigLine></BigLabel>
              </BigButton>
            </BigRow>
          </GroupBody>
          <GroupFoot><span /><FootLabel>スタイル</FootLabel><span /></GroupFoot>
        </Group>

        <Group $w={61}>
          <GroupBody>
            <CellStack>
              <CellRow><CellOpIcon mark="in" />挿入<Caret $left={5} /></CellRow>
              <CellRow><CellOpIcon mark="del" />削除<Caret $left={5} /></CellRow>
              <CellRow><FormatIcon />書式<Caret $left={2} /></CellRow>
            </CellStack>
          </GroupBody>
          <GroupFoot><span /><FootLabel>セル</FootLabel><span /></GroupFoot>
        </Group>

        <Group $w={114}>
          <GroupBody>
            <EditWrap>
              <EditStack>
                <EditRow><SigmaIcon /><Caret /></EditRow>
                <EditRow><FillDownIcon /><Caret /></EditRow>
                <EditRow><EraserIcon /><Caret /></EditRow>
              </EditStack>
              <BigButton $w={48}>
                <IconSlot><SortIcon /></IconSlot>
                <BigLabel><span>並べ替えと</span><BigLine>フィルター<Caret $left={3} /></BigLine></BigLabel>
              </BigButton>
              <BigButton $w={34}>
                <IconSlot><FindIcon /></IconSlot>
                <BigLabel><span>検索と</span><BigLine>選択<Caret $left={3} /></BigLine></BigLabel>
              </BigButton>
            </EditWrap>
          </GroupBody>
          <GroupFoot><span /><FootLabel>編集</FootLabel><span /></GroupFoot>
        </Group>
        <CollapseSlot><ChevronUp /></CollapseSlot>
      </Ribbon>

      <FormulaBar>
        <NameBox>D3<Caret /></NameBox>
        <Dots>⋮</Dots>
        <FxBox>
          <CrossMark />
          <CheckMark />
          <FxMark>fx</FxMark>
        </FxBox>
        <FormulaInput>36019<ChevronDown /></FormulaInput>
      </FormulaBar>

      <SheetArea>
        <Sheet>
          <Grid>
            <Corner><SelectAll /></Corner>
            {COLS.map((c) => <ColHead key={c}>{c}</ColHead>)}
            <ColHead />

            <RowHead>1</RowHead>
            <Cell>区名</Cell>
            <Cell>状況</Cell>
            <Cell>開票率</Cell>
            <Cell>賛成</Cell>
            <Cell>反対</Cell>
            {emptyCells('h', 10)}

            {rows.map((r, i) => <SheetRow key={r.name} row={r} index={i + 2} />)}

            <EmptyRow n={27} />
            <Row28 />
            <EmptyRow n={29} />
            <EmptyRow n="" />
          </Grid>
        </Sheet>
        <VScroll>
          <ScrollBtn $h={12}><Tri dir="up" /></ScrollBtn>
          <VThumb />
          <VGap />
          <ScrollBtn $h={10}><Tri dir="down" /></ScrollBtn>
        </VScroll>
      </SheetArea>

      <TabStrip>
        <NavArrows><Tri dir="left" color="#c4c4c4" /><Tri dir="right" color="#c4c4c4" /></NavArrows>
        <SheetTab $w={50}>投票率</SheetTab>
        <SheetTab $w={61} $active>開票結果</SheetTab>
        <AddSheet><PlusCircle /></AddSheet>
        <HScrollWrap>
          <HDots>⋮</HDots>
          <HBtn $w={12}><Tri dir="left" /></HBtn>
          <HTrack><HThumb /></HTrack>
          <HBtn $w={10}><Tri dir="right" /></HBtn>
        </HScrollWrap>
      </TabStrip>

      <StatusBar>
        <StatusMode>準備完了</StatusMode>
        <CellModeIcon />
        <StatusInfo>
          <span>平均: 29,176</span>
          <span><StatusKana>データの個数</StatusKana>: 48</span>
          <span>合計: 1,400,429</span>
        </StatusInfo>
        <ViewGroup>
          <ViewBtn $on><NormalView /></ViewBtn>
          <ViewBtn><PageView /></ViewBtn>
          <ViewBtn><BreakView /></ViewBtn>
        </ViewGroup>
        <Zoom>
          <span>-</span>
          <ZoomTrack />
          <span>+</span>
          <ZoomLabel>100%</ZoomLabel>
        </Zoom>
      </StatusBar>

      <Menu>
        <MenuItem>
          <MenuIcon><HighlightMenuIcon /></MenuIcon>
          <MenuText>セルの強調表示ルール(<Key>H</Key>)</MenuText>
          <MenuArrow />
        </MenuItem>
        <MenuItem>
          <MenuIcon><TopMenuIcon /></MenuIcon>
          <MenuText>上位/下位ルール(<Key>T</Key>)</MenuText>
          <MenuArrow />
        </MenuItem>
        <MenuRule />
        <MenuItem>
          <MenuIcon><BarsMenuIcon /></MenuIcon>
          <MenuText>データ  バー(<Key>D</Key>)</MenuText>
          <MenuArrow />
        </MenuItem>
        <MenuItem $on>
          <MenuIcon><ScaleMenuIcon /></MenuIcon>
          <MenuText>カラー  スケール(<Key>S</Key>)</MenuText>
          <MenuArrow />
        </MenuItem>
        <MenuItem>
          <MenuIcon><SetMenuIcon /></MenuIcon>
          <MenuText>アイコン  セット(<Key>I</Key>)</MenuText>
          <MenuArrow />
        </MenuItem>
        <MenuRule />
        <MenuItem $small>
          <MenuIcon $small><SmallRule /></MenuIcon>
          <MenuText>新しいルール(<Key>N</Key>)...</MenuText>
        </MenuItem>
        <MenuItem $small>
          <MenuIcon $small><SmallRule kind="clear" /></MenuIcon>
          <MenuText>ルールのクリア(<Key>C</Key>)</MenuText>
          <MenuArrow />
        </MenuItem>
        <MenuItem $small>
          <MenuIcon $small><SmallRule /></MenuIcon>
          <MenuText>ルールの管理(<Key>R</Key>)...</MenuText>
        </MenuItem>
      </Menu>

      <SubMenu>
        {SCALES.map((c, i) => (
          <SwatchBtn key={i} $on={i === 1}>{c && <Thumb colors={c} />}</SwatchBtn>
        ))}
      </SubMenu>

      <Tooltip>
        <TipTitle>赤、黄、緑のカラー スケール</TipTitle>
        <TipLine>範囲指定されたセルに色のグラデー</TipLine>
        <TipLine>ションを付けます。各セルの値がその</TipLine>
        <TipLine>範囲のどこに該当するのかが、色で表</TipLine>
        <TipLine>現されます。</TipLine>
      </Tooltip>

      <Overlay $x={738} $y={243} width="13" height="18" viewBox="0 0 13 18">
        <path d="M1 1v13l3-3 2.5 5.5 2.5-1L6.5 10.5H11z" fill="#fff" stroke="#444" strokeWidth="1" />
      </Overlay>

      <Overlay $x={682} $y={542} width="40" height="24" viewBox="0 0 40 24">
        <path d="M1 1 20 3 18 7 39 23 16 12 11 16z" fill="#3a95e4" />
      </Overlay>
    </Window>
  </Page>
);

export default App;
